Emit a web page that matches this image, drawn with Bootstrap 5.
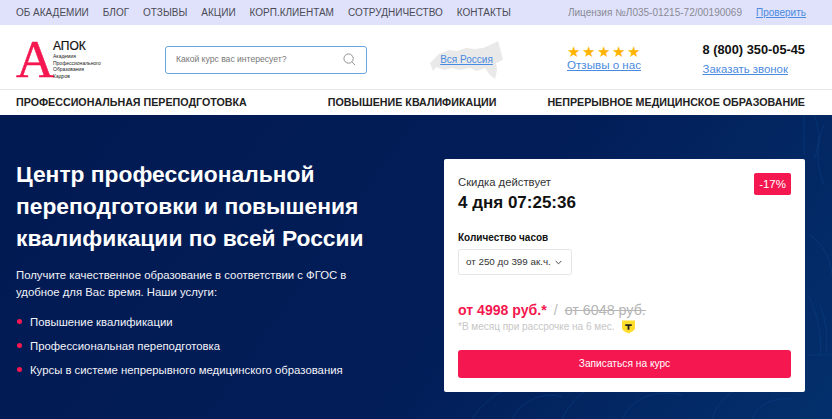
<!DOCTYPE html>
<html lang="ru">
<head>
  <meta charset="UTF-8" />
  <title>АПОК</title>
  <link href="https://cdn.jsdelivr.net/npm/bootstrap@5.3.3/dist/css/bootstrap.min.css" rel="stylesheet" />
  <style>
    html, body { height: 419px; overflow: hidden; }
    body { font-family: "Liberation Sans", Arial, sans-serif; color: #111; background: #fff; }
    a { color: #4a8ae0; }

    .top-strip { height: 25px; background: #e0e2fb; padding: 0 26px 0 16px; font-size: 10px; white-space: nowrap; }
    .top-strip a.menu-link { color: #4a4a55; text-decoration: none; }
    .top-menu { gap: 14px; }
    .license { color: #8a8a95; margin-right: 14px; }

    .head-row { height: 65px; padding: 5px 27px 0 16px; border-bottom: 1px solid #e8e8e8; white-space: nowrap; }
    .logo-box { width: 149px; }
    .logo-letter { font-family: "Liberation Serif", serif; font-size: 53px; line-height: 36px; height: 36px; width: 37px; margin-top: -2px; color: #f5174f; -webkit-text-stroke: .5px #f5174f; }
    .logo-name { font-size: 12px; line-height: 13px; color: #111; -webkit-text-stroke: .2px #111; }
    .logo-sub { font-size: 5px; line-height: 6.5px; color: #222; }
    .search-box { width: 202px; height: 28px; border: 1px solid #6aa5e0; border-radius: 3px; padding: 0 10px; font-size: 8.6px; color: #777; }
    .region { width: 73px; height: 39px; margin-left: 63px; font-size: 10px; }
    .region svg { position: absolute; left: 0; top: 0; }
    .region a { position: relative; }
    .reviews { margin-left: 64px; margin-top: -2px; width: 73px; }
    .reviews a { font-size: 11.6px; line-height: 14px; display: block; }
    .stars { color: #ffb400; font-size: 15px; line-height: 12px; letter-spacing: 2.1px; height: 12px; }
    .phone-box { margin-left: auto; }
    .phone-num { font-size: 12.8px; font-weight: 700; line-height: 18px; }
    .phone-box a { font-size: 11.4px; line-height: 18px; display: block; margin-top: 1px; }

    .main-nav { height: 25px; padding: 0 27px 0 16px; font-size: 10.7px; font-weight: 700; color: #222; white-space: nowrap; }
    .nav-second { margin-left: 81px; }

    .hero { height: 304px; padding: 44px 27px 0 16px; color: #fff; background: linear-gradient(125deg, #021a52 0%, #021d58 55%, #03306c 100%); position: relative; overflow: hidden; }
    .hero-left { width: 428px; flex: none; }
    .hero-title { font-size: 22.8px; font-weight: 700; line-height: 32px; margin: -1px 0 13px; }
    .hero-text { font-size: 11.35px; line-height: 17px; margin: 0 0 13px; color: #f2f3f8; }
    .service-list { list-style: none; margin: 0; padding: 0; font-size: 11.35px; line-height: 16px; color: #f2f3f8; }
    .service-list li { padding-left: 14px; margin-bottom: 8px; position: relative; }
    .service-list li::before { content: ""; position: absolute; left: 1px; top: 5px; width: 5px; height: 5px; border-radius: 50%; background: #f5174f; }

    .price-card { width: 361px; height: 233px; flex: none; border: 0; border-radius: 2px; padding: 15px 14px 0; color: #111; position: relative; z-index: 1; }
    .sale-tag { position: absolute; right: 14px; top: 14px; background: #f5174f; color: #fff; font-size: 11.5px; line-height: 22px; padding: 0 5px; border-radius: 2px; }
    .sale-label { font-size: 11.3px; line-height: 16px; color: #333; }
    .sale-time { font-size: 17px; font-weight: 700; line-height: 22px; margin-top: 2px; }
    .hours-label { font-size: 10px; font-weight: 700; line-height: 14px; margin-top: 17px; }
    .hours-pick { width: 114px; height: 26px; border: 1px solid #e6e6e6; border-radius: 2px; margin-top: 4px; padding: 0 9px 0 7px; font-size: 9.8px; color: #333; white-space: nowrap; }
    .price-row { margin-top: 26px; font-size: 14.1px; line-height: 18px; }
    .price-now { color: #f5174f; font-weight: 700; }
    .price-sep { color: #bbb; margin: 0 7px; }
    .price-old { color: #b5b5b5; text-decoration: line-through; font-size: 14.3px; }
    .price-note { font-size: 10px; line-height: 14px; color: #c6c6c6; margin-top: 1px; }
    .price-note svg { margin-left: 7px; }
    .price-btn { display: block; height: 28px; margin-top: 16px; padding: 0; background: #f5174f; border: 0; border-radius: 3px; color: #fff; font-size: 10.2px; width: 100%; }
    .hero-pattern { position: absolute; right: 0; bottom: 0; }
  </style>
</head>
<body>
  <div class="top-strip d-flex align-items-center justify-content-between">
    <div class="top-menu d-flex">
      <a class="menu-link" href="#">ОБ АКАДЕМИИ</a>
      <a class="menu-link" href="#">БЛОГ</a>
      <a class="menu-link" href="#">ОТЗЫВЫ</a>
      <a class="menu-link" href="#">АКЦИИ</a>
      <a class="menu-link" href="#">КОРП.КЛИЕНТАМ</a>
      <a class="menu-link" href="#">СОТРУДНИЧЕСТВО</a>
      <a class="menu-link" href="#">КОНТАКТЫ</a>
    </div>
    <div class="d-flex">
      <span class="license">Лицензия №Л035-01215-72/00190069</span>
      <a href="#">Проверить</a>
    </div>
  </div>

  <div class="head-row d-flex align-items-center">
    <div class="logo-box d-flex align-items-center">
      <div class="logo-letter">А</div>
      <div>
        <div class="logo-name">АПОК</div>
        <div class="logo-sub">Академия<br>Профессионального<br>Образования<br>Кадров</div>
      </div>
    </div>
    <div class="search-box d-flex align-items-center justify-content-between">
      <span>Какой курс вас интересует?</span>
      <svg width="13" height="13" viewBox="0 0 14 14" fill="none" stroke="#8b8b8b" stroke-width="1"><circle cx="6" cy="6" r="5"/><path d="M9.8 9.8 13 13"/></svg>
    </div>
    <div class="region position-relative d-flex align-items-center justify-content-center">
      <svg width="73" height="39" viewBox="0 0 73 39"><path fill="#e9e9e9" d="M0 23 5 18 9 14 19 10 27 11 36 8 45 9 53 8 60 5 68 1 70 8 73 20 66 23 67 30 65 39 60 35 55 28 47 31 40 28 29 30 22 28 14 30 6 27 3 31z"/></svg>
      <a href="#">Вся Россия</a>
    </div>
    <div class="reviews">
      <div class="stars">★★★★★</div>
      <a href="#">Отзывы о нас</a>
    </div>
    <div class="phone-box">
      <div class="phone-num">8 (800) 350-05-45</div>
      <a href="#">Заказать звонок</a>
    </div>
  </div>

  <div class="main-nav d-flex align-items-center">
    <span>ПРОФЕССИОНАЛЬНАЯ ПЕРЕПОДГОТОВКА</span>
    <span class="nav-second">ПОВЫШЕНИЕ КВАЛИФИКАЦИИ</span>
    <span class="ms-auto">НЕПРЕРЫВНОЕ МЕДИЦИНСКОЕ ОБРАЗОВАНИЕ</span>
  </div>

  <div class="hero d-flex">
    <svg class="hero-pattern" width="380" height="304" viewBox="0 0 380 304" fill="none" stroke="#0b4085" stroke-width="1" opacity=".55">
      <path d="M20 304c20-30 50-40 80-30M60 304c10-18 30-28 50-22M110 304c20-40 60-50 100-34M170 304c10-20 30-30 60-24M260 304c10-30 40-40 60-34M300 304c6-14 20-22 40-20"/>
      <path d="M352 0v40M362 0c6 14 6 30 0 44M372 10c-8 20-8 40 0 60M358 120c14 10 20 24 22 40M356 180c10 20 14 40 12 60M368 190c6 16 8 30 6 50M356 240h24"/>
    </svg>
    <div class="hero-left">
      <h1 class="hero-title">Центр профессиональной<br>переподготовки и повышения<br>квалификации по всей России</h1>
      <p class="hero-text">Получите качественное образование в соответствии с ФГОС в<br>удобное для Вас время. Наши услуги:</p>
      <ul class="service-list">
        <li>Повышение квалификации</li>
        <li>Профессиональная переподготовка</li>
        <li>Курсы в системе непрерывного медицинского образования</li>
      </ul>
    </div>
    <div class="card price-card">
      <span class="sale-tag">-17%</span>
      <div class="sale-label">Скидка действует</div>
      <div class="sale-time">4 дня 07:25:36</div>
      <div class="hours-label">Количество часов</div>
      <div class="hours-pick d-flex align-items-center justify-content-between">
        <span>от 250 до 399 ак.ч.</span>
        <svg width="7" height="5" viewBox="0 0 7 5" fill="none" stroke="#444" stroke-width="1"><path d="M.7 1 3.5 3.8 6.3 1"/></svg>
      </div>
      <div class="price-row"><span class="price-now">от 4998 руб.*</span><span class="price-sep">/</span><span class="price-old">от 6048 руб.</span></div>
      <div class="price-note d-flex align-items-center">*В месяц при рассрочке на 6 мес.
        <svg width="13" height="14" viewBox="0 0 14 14"><path fill="#ffdd2d" d="M0 0h14v8c0 3-4 4-7 6-3-2-7-3-7-6z"/><path fill="#222" d="M3.5 4h7v2H8v4H6V6H3.5z"/></svg>
      </div>
      <button class="btn price-btn" type="button">Записаться на курс</button>
    </div>
  </div>
</body>
</html>
